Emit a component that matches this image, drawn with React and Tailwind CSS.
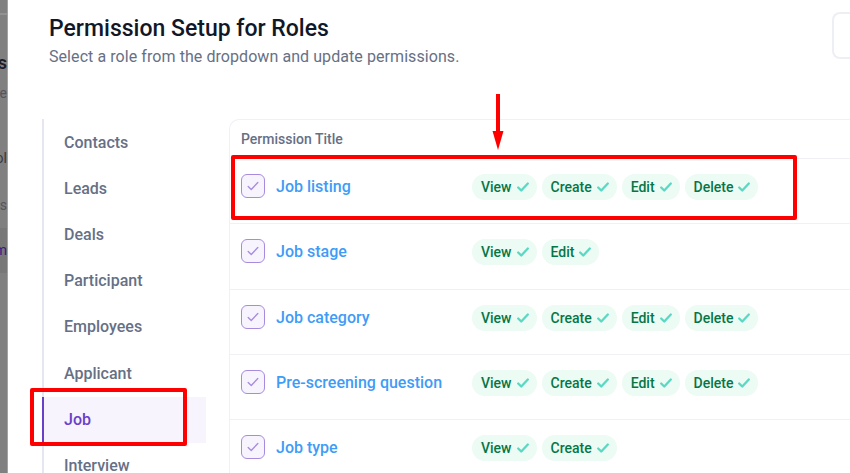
import React from 'react';

const FONT = { fontFamily: 'Roboto, "Noto Sans", sans-serif' };

const SECTIONS = ['Contacts', 'Leads', 'Deals', 'Participant', 'Employees', 'Applicant', 'Job', 'Interview'];

const PERMISSIONS = [
  { title: 'Job listing', actions: ['View', 'Create', 'Edit', 'Delete'] },
  { title: 'Job stage', actions: ['View', 'Edit'] },
  { title: 'Job category', actions: ['View', 'Create', 'Edit', 'Delete'] },
  { title: 'Pre-screening question', actions: ['View', 'Create', 'Edit', 'Delete'] },
  { title: 'Job type', actions: ['View', 'Create'] },
];

function Check({ className, width = 1.5 }) {
  return (
    <svg viewBox="0 0 16 16" fill="none" stroke="currentColor" strokeWidth={width} strokeLinecap="round" strokeLinejoin="round" className={className}>
      <path d="M2.5 8.500l3.500 3.500 7.500-8" />
    </svg>
  );
}

function Chip({ label }) {
  return (
    <span className="flex h-[26px] items-center gap-[4px] rounded-full bg-[#ecfbf3] pl-[9px] pr-[7px] text-[14px] leading-none font-medium text-[#067647]">
      {label}
      <Check width={2.6} className="h-[14px] w-[14px] text-[#5ad8c3]" />
    </span>
  );
}

function Row({ title, actions }) {
  return (
    <div className="flex h-[65.3px] shrink-0 items-start border-b border-[#f0f0f5] pt-[15px] pl-[11px]">
      <span className="flex h-[24px] w-[24px] shrink-0 items-center justify-center rounded-[6px] border-[1.5px] border-[#a78bdf] bg-[#f7f4fe] text-[#a78bdf]">
        <Check width={1.5} className="h-[14px] w-[14px]" />
      </span>
      <span className="mt-[1px] ml-[11px] w-[196px] shrink-0 text-[16px] leading-[24px] font-medium text-[#3f9cf6]">{title}</span>
      <div className="flex gap-[5px]">
        {actions.map((a) => (
          <Chip key={a} label={a} />
        ))}
      </div>
    </div>
  );
}

export default function App() {
  return (
    <div style={FONT} className="relative flex h-[473px] w-[850px] overflow-hidden bg-white">
      {/* page behind the modal, only a sliver shows */}
      <div className="relative flex h-full w-[8px] shrink-0 flex-col items-end overflow-hidden border-r border-[#a3a3a3] bg-[#808080] text-[14px] whitespace-nowrap">
        <div className="absolute top-[13px] left-0 h-[2px] w-full bg-[#929292]" />
        <div className="absolute top-[228px] left-0 h-[45px] w-full bg-[#787878]" />
        <span className="relative mt-[52px] text-[18px] leading-[22px] font-semibold text-[#1c1c28]">es</span>
        <span className="relative mt-[10px] leading-[18px] text-[#55555c]">e</span>
        <span className="relative mt-[47px] leading-[18px] text-[#3a3a40]">ol</span>
        <span className="relative mt-[29px] leading-[18px] text-[#55555c]">es</span>
        <span className="relative mt-[27px] leading-[18px] text-[#3a1a80]">m</span>
      </div>

      <div className="flex min-w-0 flex-1 flex-col">
        <div className="flex h-[119px] shrink-0 items-start pl-[41px]">
          <div className="pt-[14px]">
            <h1 className="text-[23px] leading-[30px] font-medium text-[#101828]">Permission Setup for Roles</h1>
            <p className="mt-[3px] text-[16px] leading-[20px] tracking-[0.07px] text-[#667085]">Select a role from the dropdown and update permissions.</p>
          </div>
          <div className="mt-[12px] ml-auto h-[47px] w-[18px] rounded-l-[8px] border-y-2 border-l-2 border-[#eeeef5]" />
        </div>

        <div className="flex min-h-0 flex-1 pl-[34px]">
          <nav className="flex w-[164px] shrink-0 flex-col border-l-2 border-[#e4e7f2] pt-[0.5px]">
            {SECTIONS.map((s) => (
              <div
                key={s}
                className={
                  s === 'Job'
                    ? '-ml-[2px] flex h-[46.2px] shrink-0 items-center border-l-2 border-[#6941c6] bg-[#f7f4fe] pl-[20px] text-[16px] font-medium text-[#6941c6]'
                    : 'flex h-[46.2px] shrink-0 items-center pl-[20px] text-[16px] font-medium text-[#667085]'
                }
              >
                {s}
              </div>
            ))}
          </nav>

          <div className="ml-[23px] flex min-w-0 flex-1 flex-col rounded-tl-[10px] border-t border-l border-[#f0f0f5]">
            <div className="flex h-[39px] shrink-0 items-center border-b border-[#f0f0f5] pl-[11px] text-[14px] font-medium text-[#667085]">
              Permission Title
            </div>
            {PERMISSIONS.map((p) => (
              <Row key={p.title} title={p.title} actions={p.actions} />
            ))}
          </div>
        </div>
      </div>

      {/* red annotations drawn over the screenshot */}
      <div className="absolute top-[155px] left-[231px] h-[65px] w-[566px] rounded-[2px] border-[4px] border-[#ff0000]" />
      <div className="absolute top-[388px] left-[30px] h-[58px] w-[157px] rounded-[2px] border-[4px] border-[#ff0000]" />
      <svg className="absolute top-[94px] left-[488px] h-[57px] w-[20px]" viewBox="0 0 20 57" fill="#ff0000">
        <rect x="8" y="0" width="4" height="40" />
        <path d="M4.500 37h11l-5.500 19z" />
      </svg>
    </div>
  );
}
